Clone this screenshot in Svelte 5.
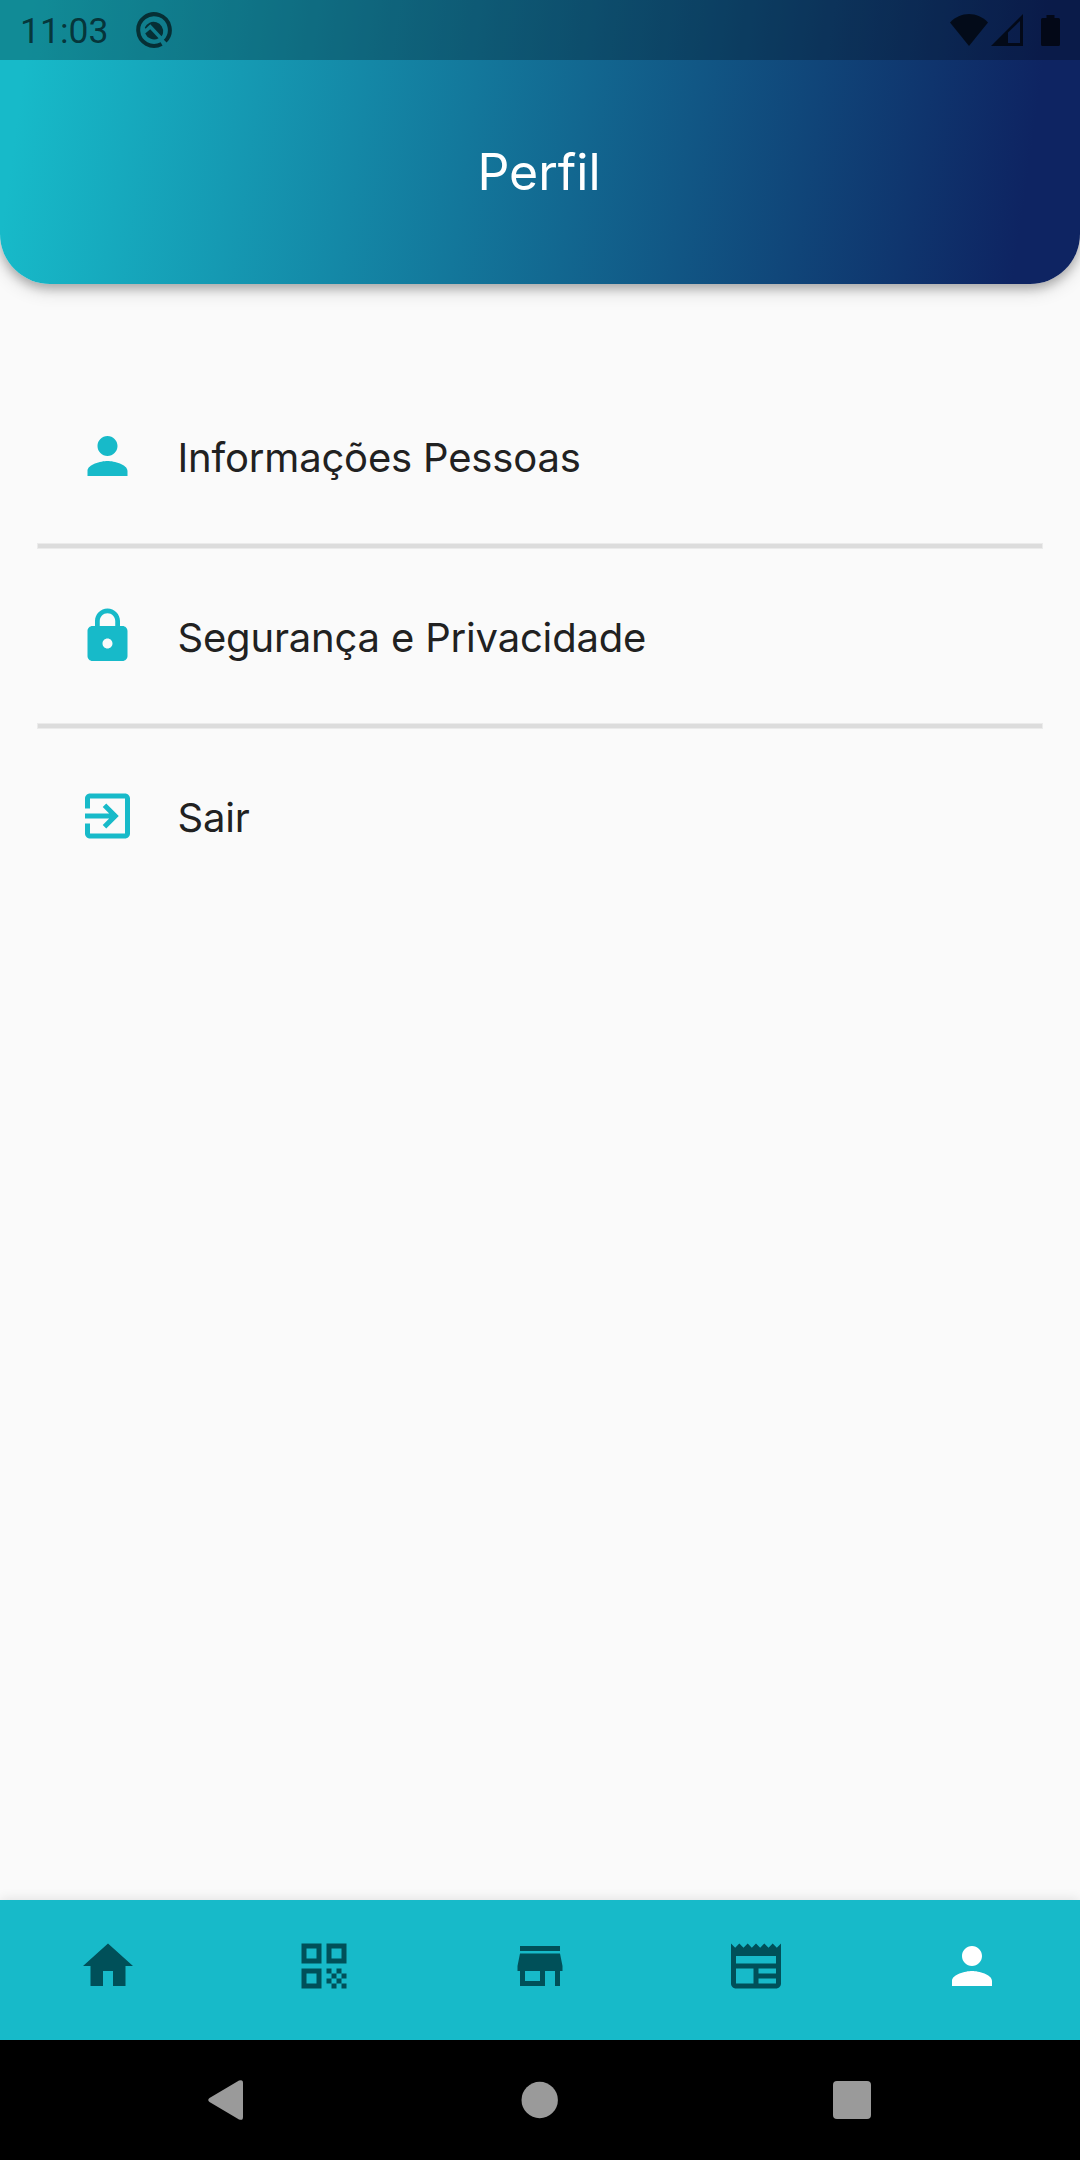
<script lang="ts">
    const PERSON = 'M12 12c2.21 0 4-1.79 4-4s-1.79-4-4-4-4 1.79-4 4 1.79 4 4 4zm0 2c-2.67 0-8 1.34-8 4v2h16v-2c0-2.66-5.33-4-8-4z';

    const items = [
        { label: 'Informações Pessoas', icon: PERSON },
        {
            label: 'Segurança e Privacidade',
            icon: 'M18 8h-1V6c0-2.76-2.24-5-5-5S7 3.24 7 6v2H6c-1.1 0-2 .9-2 2v10c0 1.1.9 2 2 2h12c1.1 0 2-.9 2-2V10c0-1.1-.9-2-2-2zm-6 9c-1.1 0-2-.9-2-2s.9-2 2-2 2 .9 2 2-.9 2-2 2zm3.1-9H8.9V6c0-1.71 1.39-3.1 3.1-3.1 1.71 0 3.1 1.39 3.1 3.1v2z'
        },
        {
            label: 'Sair',
            icon: 'M10.09 15.59L11.5 17l5-5-5-5-1.41 1.41L12.67 11H3v2h9.67l-2.58 2.59zM19 3H5c-1.11 0-2 .9-2 2v4h2V5h14v14H5v-4H3v4c0 1.1.89 2 2 2h14c1.1 0 2-.9 2-2V5c0-1.1-.9-2-2-2z'
        }
    ];

    const tabs = [
        { name: 'home', icon: 'M10 20v-6h4v6h5v-8h3L12 3 2 12h3v8z' },
        {
            name: 'qrcode',
            icon: 'M3 11h8V3H3v8zm2-6h4v4H5V5zM3 21h8v-8H3v8zm2-6h4v4H5v-4zM13 3v8h8V3h-8zm6 6h-4V5h4v4zM19 19h2v2h-2zM13 13h2v2h-2zM15 15h2v2h-2zM13 17h2v2h-2zM15 19h2v2h-2zM17 17h2v2h-2zM17 13h2v2h-2zM19 15h2v2h-2z'
        },
        { name: 'store', icon: 'M20 4H4v2h16V4zm1 10v-2l-1-5H4l-1 5v2h1v6h10v-6h4v6h2v-6h1zm-9 4H6v-4h6v4z' },
        {
            name: 'news',
            icon: 'M22 3l-1.67 1.67L18.67 3 17 4.67 15.33 3l-1.66 1.67L12 3l-1.67 1.67L8.67 3 7 4.67 5.33 3 3.67 4.67 2 3v16c0 1.1.9 2 2 2h16c1.1 0 2-.9 2-2V3zM11 19H4v-6h7v6zm9 0h-7v-2h7v2zm0-4h-7v-2h7v2zm0-4H4V8h16v3z'
        },
        { name: 'profile', icon: PERSON }
    ];

    let active = $state('profile');
</script>

<div class="screen">
    <header class="app-bar">
        <div class="status-bar">
            <span class="clock">11:03</span>
            <svg class="debug" width="36" height="36" viewBox="0 0 36 36">
                <path d="M29.200 29.200A15.800 15.800 0 1 0 25.600 31.900" fill="none" stroke="currentColor" stroke-width="4" />
                <path d="M8.800 15.500A9.600 9.600 0 0 1 27 21.200Q26.500 23 25.500 24.200L14.300 12.200L9.600 16.800zM9.200 21.500L14.200 17.200L22.600 26.300A9.600 9.600 0 0 1 9.200 21.500z" />
            </svg>
            <div class="signals">
                <svg width="38" height="32" viewBox="0 0 38 32"><path d="M19 32L0 8.500C5 3 12 0 19 0s14 3 19 8.500z" /></svg>
                <svg class="cell" width="32" height="32" viewBox="0 0 32 32"><path fill-rule="evenodd" d="M0 32L32 0v32zM17 18.500V29h12V7z" /></svg>
                <svg class="battery" width="19" height="31" viewBox="0 0 19 31"><path d="M5.500 0h8v3H17.500q1.500 0 1.500 1.500v25q0 1.500-1.500 1.500h-16q-1.500 0-1.500-1.500v-25Q0 3 1.500 3H5.500z" /></svg>
            </div>
        </div>
        <h1>Perfil</h1>
    </header>

    <main>
        {#each items as item, i}
            {#if i > 0}<hr />{/if}
            <div class="item">
                <svg width="60" height="60" viewBox="-0.2 0 24 24"><path d={item.icon} /></svg>
                <span>{item.label}</span>
            </div>
        {/each}
    </main>

    <nav class="tabs">
        {#each tabs as tab}
            <button class:active={active === tab.name} aria-label={tab.name} onclick={() => (active = tab.name)}>
                <svg width="60" height="60" viewBox="0 0 24 24"><path d={tab.icon} /></svg>
            </button>
        {/each}
    </nav>

    <div class="system-nav">
        <svg width="36" height="40" viewBox="0 0 36 40"><path d="M31 .600Q35 -1 35 3v34Q35 41 31 39.400L1.500 22Q-1 20 1.500 18z" /></svg>
        <svg width="38" height="38" viewBox="0 0 38 38"><circle cx="19.700" cy="19" r="18.200" /></svg>
        <svg width="38" height="38" viewBox="0 0 38 38"><rect width="38" height="38" rx="4" /></svg>
    </div>
</div>

<style>
    :global(body) {
        margin: 0;
        background: #fafafa;
    }

    .screen {
        width: 1080px;
        height: 2160px;
        display: flex;
        flex-direction: column;
        background: #fafafa;
        font-family: Inter, 'Liberation Sans', sans-serif;
        overflow: hidden;
    }

    svg {
        display: block;
        fill: currentColor;
        flex: none;
    }

    .app-bar {
        height: 284px;
        flex: none;
        border-radius: 0 0 50px 50px;
        overflow: hidden;
        background: linear-gradient(98deg, #17bac9 3%, #0e2462 94%);
        box-shadow: 0 5px 10px rgba(0, 0, 0, 0.2), 0 4px 20px rgba(0, 0, 0, 0.2);
    }

    .status-bar {
        height: 60px;
        display: flex;
        align-items: center;
        box-sizing: border-box;
        padding: 0 20px;
        background: rgba(0, 0, 0, 0.25);
        color: rgba(0, 0, 0, 0.62);
    }

    .clock {
        font-family: Roboto, sans-serif;
        font-size: 35.5px;
        line-height: 60px;
        padding-top: 2px;
        width: 115.5px;
    }

    /* keeps the overlapping strokes of the badge at one tone */
    .debug {
        color: #000;
        opacity: 0.62;
    }

    .signals {
        margin-left: auto;
        display: flex;
        align-items: center;
        color: rgba(0, 0, 0, 0.68);
    }

    .cell {
        margin: 0 18px 0 3px;
    }

    h1 {
        margin: 0;
        height: 224px;
        line-height: 224px;
        padding-right: 2px;
        text-align: center;
        color: #fff;
        font-size: 50px;
        font-weight: 400;
    }

    main {
        flex: 1;
        padding: 85px 37px 0;
    }

    .item {
        height: 174px;
        display: flex;
        align-items: center;
        gap: 40.5px;
        padding-left: 40px;
        color: #17bac9;
    }

    .item span {
        padding-top: 3px;
        color: #212121;
        font-size: 40px;
        line-height: 60px;
        letter-spacing: -0.18px;
    }

    hr {
        margin: 0;
        height: 4px;
        border: 1px solid #ebebeb;
        background: #dcdcdc;
    }

    .tabs {
        height: 140px;
        flex: none;
        display: flex;
        background: #17bac9;
        box-shadow: 0 0 12px rgba(0, 0, 0, 0.12);
    }

    .tabs button {
        flex: 1;
        display: flex;
        justify-content: center;
        align-items: flex-start;
        padding: 36px 0 0;
        border: 0;
        background: none;
        color: #005059;
    }

    .tabs button.active {
        color: #fff;
    }

    .system-nav {
        height: 120px;
        flex: none;
        display: flex;
        justify-content: space-between;
        align-items: center;
        box-sizing: border-box;
        padding: 0 209px 0 208px;
        background: #000;
        color: #9a9a9a;
    }
</style>
